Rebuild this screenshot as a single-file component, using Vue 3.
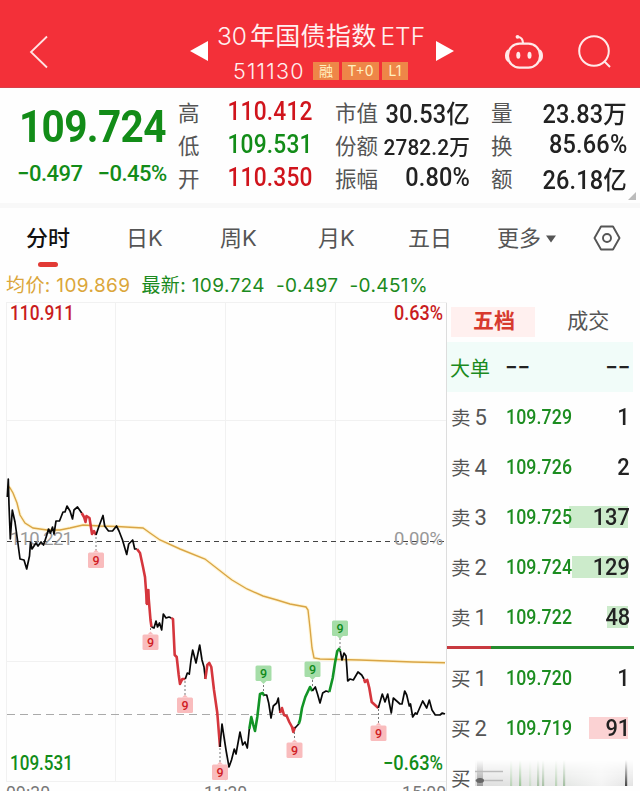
<script setup>
const stats = [
  [
    { label: '高', value: '110.412', tone: 'up' },
    { label: '低', value: '109.531', tone: 'down' },
    { label: '开', value: '110.350', tone: 'up' },
  ],
  [
    { label: '市值', value: '30.53', unit: '亿' },
    { label: '份额', value: '2782.2', unit: '万', small: true },
    { label: '振幅', value: '0.80%' },
  ],
  [
    { label: '量', value: '23.83', unit: '万' },
    { label: '换', value: '85.66%' },
    { label: '额', value: '26.18', unit: '亿' },
  ],
]

const sells = [
  { side: '卖', n: 5, price: '109.729', qty: 1, bar: 0 },
  { side: '卖', n: 4, price: '109.726', qty: 2, bar: 0 },
  { side: '卖', n: 3, price: '109.725', qty: 137, bar: 59 },
  { side: '卖', n: 2, price: '109.724', qty: 129, bar: 56 },
  { side: '卖', n: 1, price: '109.722', qty: 48, bar: 21 },
]
const buys = [
  { side: '买', n: 1, price: '109.720', qty: 1, bar: 0 },
  { side: '买', n: 2, price: '109.719', qty: 91, bar: 39 },
]

const average =
  'M8,486 L10,488 13,493 17,503 20,515 25,523 33,528 47,530 60,530 70,528 83,525 100,526 117,526.5 143,528 150,533 160,540 180,549 205,559 228,577 232,580 247,589 263,596 277,600 290,604 306,607 308,610 310,628 312,648 314,658 320,659 360,660 413,662 445,662.7'

const segments = [
  { c: 'k', p: '7.3,497 8.3,479 9,505 10.3,539 12.3,510 15,522 17.5,540 20,559 24,560 26.7,569 29.5,556 30.5,542 32,549 36,543 38,546 41,542 43.5,545 46.5,536 48.5,529 50.5,533 52.5,527 54,534 56,521 59.5,521 63,512 65,512 67,506 70,511 72.5,519 74,510 77.5,507 81.7,513' },
  { c: 'r', p: '81.7,513 84,517 85.5,522 86.5,516 89.5,518 92,534 94,531 96,535' },
  { c: 'k', p: '96,535 98.7,527 103,515.5 104.7,526 108.5,531 112.5,531 116.5,526 119,531 122.5,540 126.7,554.5 128.7,544 132.7,540 134.7,549 137,549' },
  { c: 'r', p: '137,549 140,553 143,567 145,577 147,604 148,590 150.5,620 151.5,627' },
  { c: 'k', p: '151.5,627 154,628 156,621 157.5,627 159.5,623 161.7,630 163.3,614 166,618 169,617 171.3,618' },
  { c: 'r', p: '171.3,618 173,619 174.7,655 176.7,657 178.7,675 180,684 182.3,679 185.3,679' },
  { c: 'k', p: '185.3,679 187.3,673 189.3,674 191,660 192.7,650 196,663 199.7,645 202,660 204,667 205.3,679' },
  { c: 'r', p: '205.3,679 207.3,665 209.3,663 211.3,667 214,690 217.3,713 220,747' },
  { c: 'k', p: '220,747 222,724 224,737 226,750 229,767 231.5,760 234.3,749 236,754 240,732 242.7,745 245,742 247.3,748 249.3,729' },
  { c: 'g', p: '249.3,729 251.3,717 253.3,725 255,731 257.3,717 260,694 262.7,693 264.3,696' },
  { c: 'k', p: '264.3,695 266.7,695 268.7,703 271,718 273.3,706 276.7,703 278.3,698 280,713' },
  { c: 'r', p: '280,713 282,708 284,715 286.7,716 289.3,722 292,727 293.3,732 295,727' },
  { c: 'k', p: '295,728 298.7,724' },
  { c: 'g', p: '298.7,724 300,720 302,708 305.3,697 310,687 312.3,691' },
  { c: 'k', p: '312.3,691 315.3,687 317.5,694 320,703 322.7,693 326,691 329.3,692' },
  { c: 'g', p: '329.3,692 332.7,678 335,663 337.3,651 339,649 340.3,651' },
  { c: 'k', p: '340.3,651 342,660 344,653 346,656 347,670 347.7,681 350,679 353.3,680 358,672 361.7,675 364,679' },
  { c: 'r', p: '364,679 365,682 367.3,680 369.3,688 371.7,702 375,705 378.3,708' },
  { c: 'k', p: '378.3,708 382.3,694 385,702 387.7,694 389.3,703 391.3,713 393.3,698 396.7,701 400,704 402,704 404.7,691 406.7,695 409.3,706 410.5,704 412.7,717 415.3,713 417,714 422.7,701 426.7,708 429.3,700 432,710 435.3,715 440,715 442.3,713 445,714' },
]

const marks = [
  { x: 96, y: 560, from: 537, down: true },
  { x: 150.5, y: 642, from: 628, down: true },
  { x: 185, y: 705, from: 681, down: true },
  { x: 220, y: 772, from: 748, down: true },
  { x: 294.5, y: 750, from: 732, down: true },
  { x: 378.5, y: 733, from: 709, down: true },
  { x: 263.5, y: 673, from: 691, down: false },
  { x: 312.5, y: 669, from: 686, down: false },
  { x: 340, y: 628, from: 648, down: false },
]

const streaks = [
  { x: 36, c: '#b9d1b6' },
  { x: 45, c: '#9cc498' },
  { x: 55, c: '#cadbc8' },
  { x: 63, c: '#a8c0a5' },
  { x: 68, c: '#a8c0a5' },
  { x: 81, c: '#b9d1b6' },
  { x: 89, c: '#a2bda0' },
  { x: 151, c: '#444' },
]
</script>

<template>
  <div class="app">
    <header class="topbar">
      <svg class="back" viewBox="0 0 20 34"><path d="M18 1.5 2 17 18 32.5" /></svg>
      <div class="fund">
        <svg class="arrow" viewBox="0 0 18 20"><path d="M18 0V20L0 10Z" /></svg>
        <div class="names">
          <div class="title"><span>30</span>年国债指数<span class="etf">ETF</span></div>
          <div class="sub">
            <span class="code">511130</span>
            <i class="tag t1">融</i><i class="tag t2">T+0</i><i class="tag t3">L1</i>
          </div>
        </div>
        <svg class="arrow" viewBox="0 0 18 20"><path d="M0 0V20L18 10Z" /></svg>
      </div>
      <svg class="robot" viewBox="0 0 38 36">
        <rect x="3" y="9.700" width="32" height="24" rx="11.500" />
        <path d="M3.500 16.500C0.300 18.500 0.300 25 3.500 27M34.500 16.500C37.700 18.500 37.700 25 34.500 27M18 9.500C18 5.500 16 3 12.500 3" />
        <ellipse class="solid" cx="13.300" cy="21.300" rx="2" ry="3.500" />
        <ellipse class="solid" cx="24.500" cy="21.300" rx="2" ry="3.500" />
        <circle class="solid" cx="12.500" cy="2.800" r="1.900" />
      </svg>
      <svg class="search" viewBox="0 0 34 34">
        <circle cx="16" cy="16" r="14.800" /><path d="M26 26 32 32" />
      </svg>
    </header>

    <section class="quote">
      <div class="last">
        <div class="price">109.724</div>
        <div class="change"><span>−0.497</span><span>−0.45%</span></div>
      </div>
      <dl v-for="(col, i) in stats" :key="i" :class="['col', 'col' + i]">
        <div v-for="s in col" :key="s.label" class="stat">
          <dt>{{ s.label }}</dt>
          <dd :class="[s.tone, { small: s.small }]">{{ s.value }}<b v-if="s.unit">{{ s.unit }}</b></dd>
        </div>
      </dl>
      <i class="corner"></i>
    </section>

    <nav class="tabs">
      <a class="active">分时</a>
      <a>日K</a>
      <a>周K</a>
      <a>月K</a>
      <a>五日</a>
      <a class="more">更多<svg viewBox="0 0 10 8"><path d="M0 0.500H10L5 7.500Z" /></svg></a>
      <svg class="gear" viewBox="0 0 28 26">
        <path d="M8 1.500H20L26.500 13 20 24.500H8L1.500 13Z" /><circle cx="14" cy="13" r="4" />
      </svg>
    </nav>

    <div class="info">
      <span class="avg">均价: 109.869</span>
      <span class="now">最新: 109.724</span>
      <span>-0.497</span>
      <span>-0.451%</span>
    </div>

    <main class="main">
      <svg class="chart" viewBox="0 302 447 489">
        <path class="grid" d="M6.500 302V781M115.500 302V781M225.500 302V781M335.500 302V781M6 302.500H447M6 420.500H447M6 661.500H447M6 781.500H447" />
        <path class="edge" d="M446.500 303V791" />
        <path class="zero" d="M7 541.500H446" />
        <path class="current" d="M7 714.500H446" />
        <text class="mid" x="10" y="544.500" textLength="63">110.221</text>
        <text class="mid" x="394" y="544.500" textLength="49">0.00%</text>
        <path class="glow" :d="average" />
        <path class="average" :d="average" />
        <polyline v-for="(s, i) in segments" :key="i" :class="s.c" :points="s.p" />
        <path class="block" d="M147.500 589V604" />
        <g v-for="m in marks" :key="m.x" :class="m.down ? 'sell' : 'buy'">
          <line :x1="m.x" :x2="m.x" :y1="m.from" :y2="m.down ? m.y - 9 : m.y + 9" />
          <rect :x="m.x - 8" :y="m.y - 7.5" width="16" height="15.500" rx="1.500" />
          <path v-if="m.down" :d="`M${m.x - 3} ${m.y - 7.5}l3 -3 3 3z`" />
          <path v-else :d="`M${m.x - 3} ${m.y + 8}l3 3 3 -3z`" />
          <text :x="m.x" :y="m.y + 4.5">9</text>
        </g>
        <text class="lab up" x="10" y="320" textLength="64" lengthAdjust="spacingAndGlyphs">110.911</text>
        <text class="lab up" x="394" y="320" textLength="49" lengthAdjust="spacingAndGlyphs">0.63%</text>
        <text class="lab down" x="10" y="769.500" textLength="63" lengthAdjust="spacingAndGlyphs">109.531</text>
        <text class="lab down" x="383" y="769.500" textLength="60" lengthAdjust="spacingAndGlyphs">−0.63%</text>
        <text class="time" x="6" y="799" textLength="44">09:30</text>
        <text class="time" x="204" y="799" textLength="43">11:30</text>
        <text class="time" x="402" y="799" textLength="44">15:00</text>
      </svg>

      <aside class="book">
        <div class="switch"><a class="on">五档</a><a>成交</a></div>
        <div class="big"><span>大单</span><b>−−</b><b class="end">−−</b></div>
        <div v-for="r in sells" :key="r.n" class="row">
          <span class="side">{{ r.side }}<em>{{ r.n }}</em></span>
          <span class="p">{{ r.price }}</span>
          <span class="q"><i v-if="r.bar" class="bar" :style="{ width: r.bar + 'px' }"></i><b>{{ r.qty }}</b></span>
        </div>
        <div class="ratio"><i></i></div>
        <div v-for="r in buys" :key="r.n" class="row buyrow">
          <span class="side">{{ r.side }}<em>{{ r.n }}</em></span>
          <span class="p">{{ r.price }}</span>
          <span class="q"><i v-if="r.bar" class="bar" :style="{ width: r.bar + 'px' }"></i><b>{{ r.qty }}</b></span>
        </div>
        <div class="row faded">
          <span class="side">买</span>
          <svg class="haze" viewBox="0 0 158 26">
            <defs>
              <linearGradient id="fade" x1="0" y1="0" x2="0" y2="1">
                <stop offset="0" stop-color="#fff" stop-opacity="0" />
                <stop offset="1" stop-color="#fff" />
              </linearGradient>
              <linearGradient id="mist" x1="0" y1="0" x2="1" y2="0">
                <stop offset="0" stop-color="#ddd" />
                <stop offset="0.6" stop-color="#e6e8e6" />
                <stop offset="0.800" stop-color="#f3f3f3" />
                <stop offset="1" stop-color="#e2e2e2" />
              </linearGradient>
              <mask id="down"><rect width="158" height="26" fill="url(#fade)" /></mask>
            </defs>
            <g mask="url(#down)">
              <rect width="158" height="26" fill="url(#mist)" />
              <rect class="knot" x="2" width="6" height="26" />
              <rect v-for="s in streaks" :key="s.x" :x="s.x - 1" width="2.200" height="26" :fill="s.c" />
            </g>
            <path d="M0 11.500H28M0 20.500H28" />
            <ellipse cx="5" cy="20.500" rx="4" ry="2.500" />
          </svg>
        </div>
      </aside>
    </main>
  </div>
</template>

<style>
body { background: #fefefe; }
</style>

<style scoped>
.app {
  width: 640px;
  height: 791px;
  overflow: hidden;
  display: flex;
  flex-direction: column;
  background: #fefefe;
  color: #222;
  font-family: Inter, "Noto Sans CJK SC", sans-serif;
  white-space: nowrap;
}
i, em { font-style: normal; }
svg { display: block; flex: none; overflow: visible; }

.topbar {
  height: 88px;
  flex: none;
  box-sizing: border-box;
  padding: 17px 29px 0 29px;
  display: flex;
  align-items: flex-start;
  background: #f33039;
  border-bottom: 1px solid #d8404a;
  color: #fff0f0;
}
.back { width: 20px; height: 34px; margin-top: 18px; }
.back path { fill: none; stroke: #ffe3e3; stroke-width: 1.8; }
.fund { display: flex; flex: none; margin-left: 141px; }
.arrow { width: 18px; height: 20px; margin-top: 24px; }
.arrow path { fill: #fff; }
.names { width: 227px; margin-left: 9px; margin-right: -9px; }
.names + .arrow { margin-left: 1px; }
.title { height: 38px; line-height: 38px; font-size: 25px; font-weight: 400; letter-spacing: 0.3px; }
.title span { font-size: 24.500px; font-weight: 300; letter-spacing: 0; margin-right: 3px; }
.title .etf { margin: 0 0 0 4px; }
.sub { display: flex; align-items: center; height: 32px; padding-left: 16px; }
.code { font-size: 21.500px; font-weight: 300; width: 80px; letter-spacing: 1.2px; }
.tag {
  height: 18px;
  line-height: 18px;
  background: #ee8648;
  color: #fff0c0;
  font-size: 14px;
  text-align: center;
}
.t1 { width: 26px; margin-right: 3px; }
.t2 { width: 37px; margin-right: 3px; }
.t3 { width: 26px; }
.robot { width: 38px; height: 36px; margin: 17px 0 0 51px; }
.robot rect, .robot path { fill: none; stroke: #ffe9e9; stroke-width: 2.2; }
.robot .solid { fill: #ffe9e9; }
.search { width: 34px; height: 34px; margin: 18px 0 0 35px; }
.search circle, .search path { fill: none; stroke: #ffe9e9; stroke-width: 2; }

.quote {
  position: relative;
  height: 115px;
  flex: none;
  display: flex;
  border-bottom: 5px solid #f8f8f8;
  font-family: Roboto, "Noto Sans CJK SC", sans-serif;
}
.last { width: 178px; color: #128c18; }
.price {
  height: 70px;
  line-height: 78px;
  margin-left: 19px;
  font-size: 45px;
  font-weight: 700;
  letter-spacing: -0.7px;
  transform: scaleX(0.9);
  transform-origin: left;
}
.change { display: flex; gap: 15px; padding-left: 17px; line-height: 32px; font-size: 22px; font-weight: 500; letter-spacing: -0.5px; }
.col { margin: 0; padding-top: 7px; }
.col0 { width: 135px; }
.col1 { width: 135px; margin-left: 22px; }
.col2 { width: 136px; margin-left: 21px; }
.stat { height: 33px; display: flex; justify-content: space-between; align-items: center; }
dt { font-size: 21.500px; color: #555; }
dd { margin: 0 0 0 -12px; font-size: 25px; font-weight: 500; letter-spacing: 0.2px; transform: scaleX(0.94); transform-origin: right; }
.col0 dd { transform: scaleX(0.91); }
dd b { font-weight: 500; font-size: 25px; letter-spacing: 0; }
dd.small { font-size: 22px; }
dd.small b { font-size: 22px; }
.up { color: #d0141c; fill: #c91c20; }
.down { color: #128c18; fill: #128c18; }
.corner { position: absolute; right: 4px; bottom: 3px; border: 4px solid transparent; border-right-color: #bbb; border-bottom-color: #bbb; }

.tabs {
  height: 65px;
  flex: none;
  display: flex;
  align-items: flex-start;
  padding-left: 26px;
  font-size: 22px;
  line-height: 61px;
  color: #555;
}
.tabs a { width: 94px; }
.tabs a:nth-child(1) { width: 100px; }
.tabs a:nth-child(3) { width: 98px; }
.tabs a:nth-child(4) { width: 90px; }
.tabs a:nth-child(5) { width: 89px; }
.tabs a.active { color: #111; font-weight: 500; }
.tabs a.active::after { content: ""; display: block; width: 20px; height: 5px; margin: -7px 0 0 12px; border-radius: 3px; background: #e23a35; }
.tabs a.more { display: flex; align-items: center; gap: 5px; width: 96px; }
.more svg { width: 10px; height: 8px; }
.more path { fill: #555; }
.gear { width: 28px; height: 26px; margin-top: 17px; }
.gear path, .gear circle { fill: none; stroke: #555; stroke-width: 1.900; stroke-linejoin: round; }

.info { height: 29px; flex: none; display: flex; padding-left: 6px; line-height: 25px; font-size: 19px; letter-spacing: 0.380px; color: #1b8a20; }
.info span { margin-right: 11px; }
.info .avg { color: #dba63a; }

.main { display: flex; height: 489px; flex: none; }
.chart { width: 447px; height: 489px; }
.chart path, .chart polyline { fill: none; }
.chart .grid { stroke: #f1f1f1; }
.edge { stroke: #ddd; }
.zero { stroke: #444; stroke-dasharray: 5 4; }
.current { stroke: #aaa; stroke-dasharray: 8 5; }
.mid { font: 18.500px Roboto, sans-serif; fill: #999; }
.glow { stroke: #fff5d6; stroke-width: 3.500; }
.average { stroke: #d9a545; stroke-width: 1.400; }
polyline { stroke-linejoin: round; stroke-width: 1.700; }
.k { stroke: #080808; }
.r { stroke: #d5363d; stroke-width: 2.600; }
.g { stroke: #129426; stroke-width: 2.600; }
.block { stroke: #d5363d; stroke-width: 4; }
.sell line, .buy line { stroke: #777; stroke-dasharray: 2 2; }
.sell rect, .chart .sell path { fill: #f9bcbd; }
.buy rect, .chart .buy path { fill: #a5dda8; }
.sell text, .buy text { font: 500 12.500px Roboto, sans-serif; text-anchor: middle; fill: #d01d25; }
.buy text { fill: #108a1c; }
.lab { font: 500 20px Roboto, sans-serif; }
.time { font: 17.500px Roboto, sans-serif; fill: #777; }

.book { flex: 1; padding-top: 5px; overflow: hidden; font-family: Roboto, "Noto Sans CJK SC", sans-serif; }
.switch { display: flex; height: 35px; }
.switch a { width: 76px; padding-left: 32px; height: 30px; line-height: 29px; font-size: 21px; color: #555; }
.switch a.on { width: 65px; padding-left: 22px; margin-left: 4px; background: #fff0ef; color: #d73a2e; font-weight: 700; }
.big { display: flex; align-items: center; height: 50px; margin-right: 7px; padding-left: 3px; background: #f1fcf9; font-size: 20px; color: #1b8a20; }
.big b { color: #222; font-weight: 500; font-size: 22px; margin-left: 15px; }
.big .end { margin: 0 3px 0 auto; }
.row { display: flex; align-items: center; height: 50px; padding-left: 4px; }
.side { width: 55px; margin-top: -2px; font-size: 19.500px; color: #555; }
.side em { font-size: 22px; margin-left: 4px; }
.p { position: relative; z-index: 1; width: 65px; font-size: 19.500px; font-weight: 500; letter-spacing: 0.1px; color: #1c8d20; transform: scaleX(0.91); transform-origin: left; }
.q { position: relative; width: 59px; text-align: right; font-size: 24px; line-height: 28px; }
.q b { position: relative; display: inline-block; font-weight: 500; transform: scaleX(0.91); transform-origin: right; }
.bar { position: absolute; right: 2px; top: 3px; height: 22px; background: #ccebcb; }
.buyrow .bar { background: #fbd2d3; }
.ratio { height: 11px; display: flex; align-items: center; }
.ratio::before { content: ""; width: 44px; height: 3px; background: #c83a40; }
.ratio i { width: 143px; height: 3px; background: #258a2d; }
.faded .side { width: 24px; }
.haze { width: 158px; height: 26px; margin-top: -10px; filter: blur(0.600px); }
.haze .knot { fill: #999; }
.haze path { stroke: #bbb; stroke-width: 1.500; }
.haze ellipse { fill: #666; }
</style>
